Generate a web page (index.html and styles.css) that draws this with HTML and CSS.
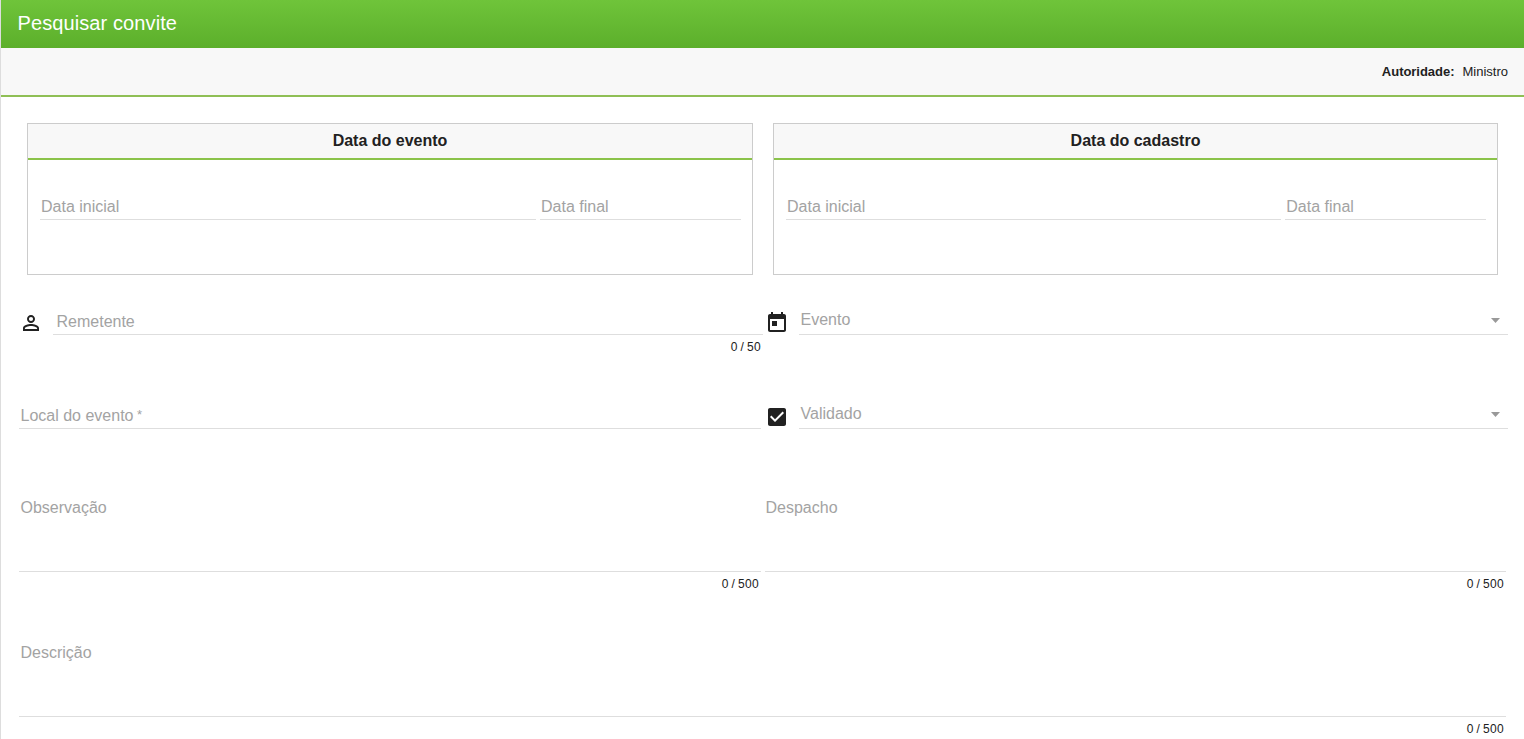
FILE: index.html
```html
<!DOCTYPE html>
<html lang="pt-BR">
<head>
<meta charset="utf-8">
<title>Pesquisar convite</title>
<link rel="stylesheet" href="styles.css">
</head>
<body>
<div class="page">
  <header class="toolbar"><h1 class="title">Pesquisar convite</h1></header>
  <div class="authority"><strong class="authority-label">Autoridade:</strong><span>Ministro</span></div>
  <main class="form">
    <div class="periods">
      <section class="period">
        <h2 class="period-title">Data do evento</h2>
        <div class="dates">
          <div class="field date-start"><label class="label">Data inicial</label></div>
          <div class="field date-end"><label class="label">Data final</label></div>
        </div>
      </section>
      <section class="period">
        <h2 class="period-title">Data do cadastro</h2>
        <div class="dates">
          <div class="field date-start"><label class="label">Data inicial</label></div>
          <div class="field date-end"><label class="label">Data final</label></div>
        </div>
      </section>
    </div>
    <div class="row row-sender">
      <div class="cell cell-sender">
        <svg class="icon" viewBox="0 0 24 24"><path d="M12 5.9a2.1 2.1 0 1 1 0 4.2 2.1 2.1 0 0 1 0-4.2m0 9c2.97 0 6.1 1.46 6.1 2.1v1.1H5.9V17c0-.64 3.13-2.1 6.1-2.1M12 4C9.79 4 8 5.79 8 8s1.79 4 4 4 4-1.79 4-4-1.79-4-4-4zm0 9c-2.67 0-8 1.34-8 4v3h16v-3c0-2.66-5.33-4-8-4z"/></svg>
        <div class="control">
          <div class="field field-sender"><label class="label">Remetente</label></div>
          <div class="counter counter-sender">0 / 50</div>
        </div>
      </div>
      <div class="cell cell-select">
        <svg class="icon" viewBox="0 0 24 24"><path d="M19 3h-1V1h-2v2H8V1H6v2H5c-1.11 0-1.99.9-1.99 2L3 19c0 1.1.89 2 2 2h14c1.1 0 2-.9 2-2V5c0-1.1-.9-2-2-2zm0 16H5V8h14v11zM7 10h5v5H7z"/></svg>
        <div class="field field-select"><label class="label">Evento</label><span class="arrow"></span></div>
      </div>
    </div>
    <div class="row row-place">
      <div class="cell cell-place">
        <div class="field field-place"><label class="label">Local do evento<span class="required">*</span></label></div>
      </div>
      <div class="cell cell-select">
        <svg class="icon" viewBox="0 0 24 24"><path d="M19 3H5c-1.11 0-2 .9-2 2v14c0 1.1.89 2 2 2h14c1.11 0 2-.9 2-2V5c0-1.1-.89-2-2-2zm-9 14l-5-5 1.41-1.41L10 14.17l7.59-7.59L19 8l-9 9z"/></svg>
        <div class="field field-select"><label class="label">Validado</label><span class="arrow"></span></div>
      </div>
    </div>
    <div class="row row-notes">
      <div class="control">
        <div class="field area"><label class="label">Observação</label></div>
        <div class="counter">0 / 500</div>
      </div>
      <div class="control">
        <div class="field area area-dispatch"><label class="label">Despacho</label></div>
        <div class="counter">0 / 500</div>
      </div>
    </div>
    <div class="control row-description">
      <div class="field area"><label class="label">Descrição</label></div>
      <div class="counter">0 / 500</div>
    </div>
  </main>
</div>
</body>
</html>
```
FILE: styles.css
```css
* { box-sizing: border-box; }
body {
  margin: 0;
  background: #fff;
  color: #212121;
  font-family: "Liberation Sans", Arial, sans-serif;
  overflow: hidden;
}
.page { height: 739px; border-left: 1px solid #ddd; overflow: hidden; }
.toolbar {
  height: 48px;
  padding: 11px 16px 0 16.5px;
  background: linear-gradient(#6fc43a, #5caf2b);
  color: #fff;
}
.title { margin: 0; font-size: 20px; font-weight: 400; line-height: 24px; letter-spacing: 0.1px; }
.authority {
  display: flex;
  justify-content: flex-end;
  align-items: center;
  gap: 8px;
  height: 49px;
  padding-right: 16px;
  background: #f8f8f8;
  border-bottom: 2px solid #8fbf55;
  font-size: 13px;
}
.authority-label { letter-spacing: -0.03px; }
.form { padding: 26px 16px 0 18px; }
.periods { display: grid; grid-template-columns: 726px 725px; gap: 20px; padding-left: 8px; }
.period { height: 152px; border: 1px solid #ccc; }
.period-title {
  height: 36px;
  margin: 0;
  background: #f8f8f8;
  border-bottom: 2px solid #8bc34a;
  font-size: 16px;
  line-height: 33px;
  text-align: center;
}
.dates { display: flex; gap: 4px; padding: 36px 11px 0 12px; }
.field { display: flex; border-bottom: 1px solid #dedede; }
.label { color: #a3a3a3; font-size: 16px; line-height: 20px; padding: 1px 0 0 1.5px; }
.dates .field { height: 24px; }
.dates .label { padding-left: 1px; }
.date-start { flex: 496 1 0; }
.date-end { flex: 201 1 0; }
.row { display: grid; }
.row-sender { grid-template-columns: 744px 743px; gap: 2px; margin-top: 36px; height: 94px; }
.row-place { grid-template-columns: 742px 743px; gap: 4px; height: 92px; }
.cell { display: flex; align-items: flex-start; }
.cell-sender { gap: 10px; }
.cell-select { gap: 10px; }
.icon { width: 24px; height: 24px; flex: none; fill: #212121; }
.control { flex: 1; min-width: 0; }
.field-sender { height: 24px; }
.field-sender .label { padding-left: 3.5px; }
.field-place { flex: 1; height: 24px; }
.field-select { flex: 1; height: 26px; margin-top: -2px; justify-content: space-between; }
.required { font-size: 13px; line-height: 1; vertical-align: 2px; margin-left: 3.5px; }
.arrow { width: 9px; height: 5px; margin: 9px 8px 0 0; background: #999; clip-path: polygon(0 0, 100% 0, 50% 100%); }
.counter { padding: 4px 2px 0 0; font-size: 12px; line-height: 16px; letter-spacing: 0.3px; word-spacing: -0.8px; text-align: right; }
.row-notes { grid-template-columns: 742px 741px; gap: 4px; height: 145px; }
.area { height: 75px; }
.area-dispatch .label { padding-left: 0.5px; }
.row-description { width: 1487px; }
```
